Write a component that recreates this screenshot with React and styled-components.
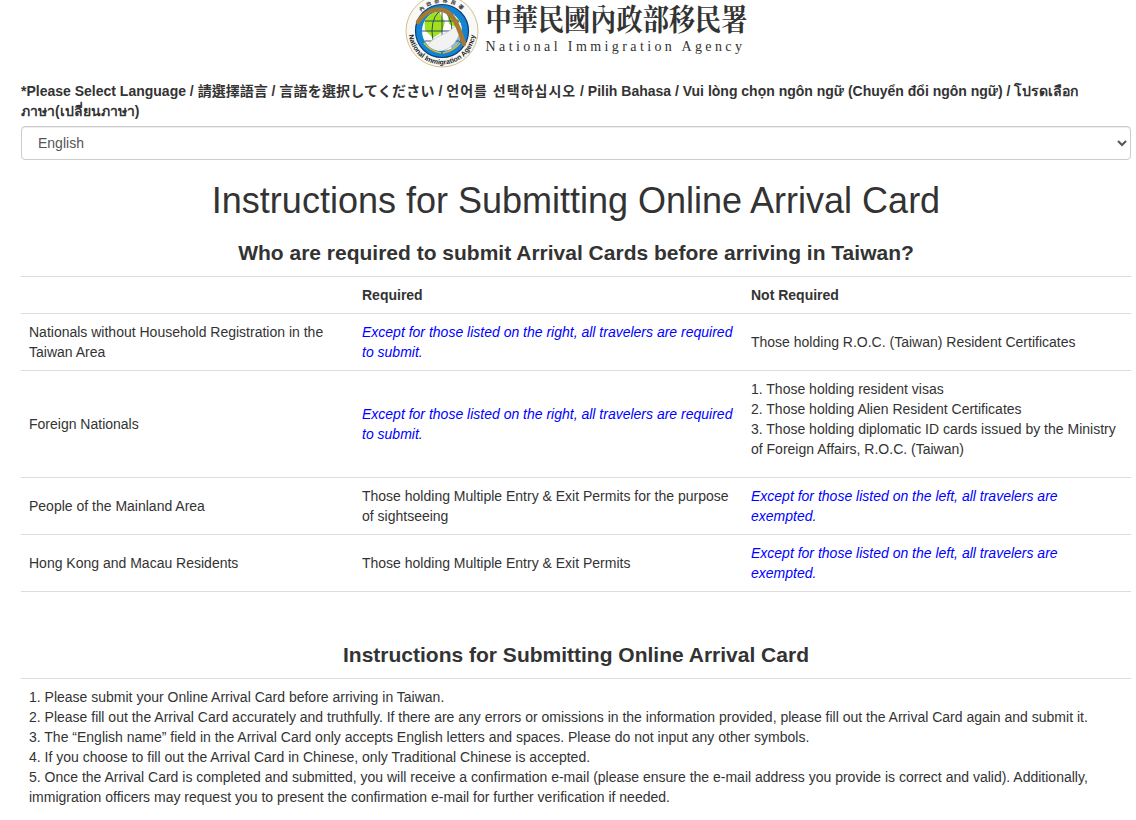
import styled, { createGlobalStyle } from "styled-components";

const GlobalStyle = createGlobalStyle`
  html, body {
    margin: 0;
    padding: 0;
    background: #fff;
  }
  body {
    font-family: "Liberation Sans", "Noto Sans CJK TC", "Noto Sans CJK KR", "Noto Sans", "DejaVu Sans", sans-serif;
    font-size: 14px;
    line-height: 20px;
    color: #333;
  }
`;

const Page = styled.div`
  padding: 0 5px 0 21px;
`;

const Header = styled.header`
  display: flex;
  justify-content: center;
  align-items: flex-start;
  height: 68px;
  overflow: hidden;
`;

const Brand = styled.div`
  display: flex;
  flex-direction: column;
  margin-left: 5px;
`;

const BrandName = styled.div`
  font-family: "Noto Serif CJK TC", "Noto Sans CJK TC", serif;
  font-size: 26.2px;
  font-weight: 700;
  line-height: 36px;
  color: #333;
  transform: scaleY(1.12);
`;

const BrandSub = styled.div`
  font-family: "Liberation Serif", serif;
  font-size: 14px;
  line-height: 18px;
  letter-spacing: 3.4px;
  color: #333;
  margin-top: 2px;
`;

const LangLabel = styled.label`
  display: block;
  margin-top: 13px;
  margin-bottom: 5px;
  font-weight: 700;
  padding-right: 40px;
`;

const Japanese = styled.span`
  letter-spacing: 0.2px;
`;

const Korean = styled.span`
  letter-spacing: 1px;
`;

const Select = styled.select`
  display: block;
  width: 100%;
  height: 34px;
  padding: 6px 12px;
  font-family: inherit;
  font-size: 14px;
  color: #555;
  background: #fff;
  border: 1px solid #ccc;
  border-radius: 4px;
  box-shadow: inset 0 1px 1px rgba(0, 0, 0, 0.075);
`;

const Title = styled.h1`
  margin: 21px 0 10px;
  font-size: 36px;
  font-weight: 500;
  line-height: 40px;
  text-align: center;
  color: #333;
`;

const SubTitle = styled.h3`
  margin: 21px 0 12px;
  font-size: 21px;
  font-weight: 700;
  line-height: 22px;
  text-align: center;
  color: #333;
`;

const Table = styled.table`
  width: 1110px;
  border-collapse: collapse;
  table-layout: fixed;
`;

const Th = styled.th`
  box-sizing: border-box;
  width: ${(p) => p.$w}px;
  padding: 8px;
  text-align: left;
  font-weight: 700;
  vertical-align: bottom;
  border-top: 1px solid #ddd;
  border-bottom: 1px solid #ddd;
`;

const Td = styled.td`
  padding: 8px;
  vertical-align: middle;
  border-bottom: 1px solid #ddd;
  color: ${(p) => (p.$note ? "#00f" : "#333")};
  font-style: ${(p) => (p.$note ? "italic" : "normal")};
`;

const CellList = styled.div`
  margin-bottom: 10px;
`;

const SectionTitle = styled.h3`
  margin: 52px 0 0;
  padding-bottom: 12px;
  border-bottom: 1px solid #ddd;
  font-size: 21px;
  font-weight: 700;
  line-height: 22px;
  text-align: center;
  color: #333;
`;

const Notes = styled.div`
  padding: 8px;
`;

const Logo = () => (
  <svg width="76" height="68" viewBox="0 0 76 68" style={{ display: "block", flex: "none" }} aria-hidden="true">
    <defs>
      <path id="ring-bottom" d="M3.5 31 A33.5 33.5 0 0 0 70.5 31" />
      <path id="ring-top" d="M9 31 A28.5 28.5 0 0 1 66 31" />
      <clipPath id="globe-clip">
        <circle cx="37" cy="31" r="20" />
      </clipPath>
    </defs>
    <circle cx="37" cy="31" r="36" fill="#f8f8f6" stroke="#d6c08c" strokeWidth="1" />
    <circle cx="37" cy="31" r="26.5" fill="#1484d0" stroke="#0d3f78" strokeWidth="1.2" />
    <circle cx="37" cy="31" r="20" fill="#fff" />
    <g clipPath="url(#globe-clip)">
      <path d="M19 15 L33 10 L40 22 L37 32 L28 38 L20 30Z" fill="#a2e01c" />
      <path d="M42 12 L54 20 L57 30 L44 24Z" fill="#a2e01c" />
      <path d="M44 42 L54 34 L58 40 L48 52Z" fill="#8db8da" />
      <g fill="none" stroke="#1c3f66" strokeWidth="0.9">
        <ellipse cx="37" cy="31" rx="10" ry="20" />
        <path d="M37 11V51M17 31H57M20 21H54M20 41H54" />
      </g>
      <path d="M22 47 C26 38 34 37 44 31 C50 27 54 23 58 19 C56 36 50 46 40 50 C33 53 27 51 22 47Z" fill="#f2f2f2" stroke="#aaa" strokeWidth="0.5" />
    </g>
    <path d="M13 22 C22 8 38 6 46 15 C52 22 56 34 59 44" fill="none" stroke="#a67834" strokeWidth="4.5" strokeLinecap="round" />
    <g fill="none" stroke="#e8bc2c" strokeWidth="1.5">
      <path d="M19 43 C24 49 30 52 36 53" />
      <path d="M55 43 C50 49 44 52 38 53" />
    </g>
    <text fontFamily="Liberation Sans, sans-serif" fontSize="7" fontWeight="700" fill="#222">
      <textPath href="#ring-bottom" startOffset="50%" textAnchor="middle">National Immigration Agency</textPath>
    </text>
    <text fontFamily="Noto Sans CJK TC, sans-serif" fontSize="5" fontWeight="700" fill="#333" letterSpacing="3">
      <textPath href="#ring-top" startOffset="50%" textAnchor="middle">內政部移民署</textPath>
    </text>
  </svg>
);

const rows = [
  {
    group: "Nationals without Household Registration in the Taiwan Area",
    required: { text: "Except for those listed on the right, all travelers are required to submit.", note: true },
    notRequired: { text: "Those holding R.O.C. (Taiwan) Resident Certificates" },
  },
  {
    group: "Foreign Nationals",
    required: { text: "Except for those listed on the right, all travelers are required to submit.", note: true },
    notRequired: {
      lines: [
        "1. Those holding resident visas",
        "2. Those holding Alien Resident Certificates",
        "3. Those holding diplomatic ID cards issued by the Ministry of Foreign Affairs, R.O.C. (Taiwan)",
      ],
    },
  },
  {
    group: "People of the Mainland Area",
    required: { text: "Those holding Multiple Entry & Exit Permits for the purpose of sightseeing" },
    notRequired: { text: "Except for those listed on the left, all travelers are exempted.", note: true },
  },
  {
    group: "Hong Kong and Macau Residents",
    required: { text: "Those holding Multiple Entry & Exit Permits" },
    notRequired: { text: "Except for those listed on the left, all travelers are exempted.", note: true },
  },
];

const notes = [
  "1. Please submit your Online Arrival Card before arriving in Taiwan.",
  "2. Please fill out the Arrival Card accurately and truthfully. If there are any errors or omissions in the information provided, please fill out the Arrival Card again and submit it.",
  "3. The “English name” field in the Arrival Card only accepts English letters and spaces. Please do not input any other symbols.",
  "4. If you choose to fill out the Arrival Card in Chinese, only Traditional Chinese is accepted.",
  "5. Once the Arrival Card is completed and submitted, you will receive a confirmation e-mail (please ensure the e-mail address you provide is correct and valid). Additionally, immigration officers may request you to present the confirmation e-mail for further verification if needed.",
];

const Cell = ({ cell }) => (
  <Td $note={cell.note}>
    {cell.lines ? (
      <CellList>
        {cell.lines.map((line) => (
          <div key={line}>{line}</div>
        ))}
      </CellList>
    ) : (
      cell.text
    )}
  </Td>
);

const App = () => (
  <Page>
    <GlobalStyle />
    <Header>
      <Logo />
      <Brand>
        <BrandName>中華民國內政部移民署</BrandName>
        <BrandSub>National Immigration Agency</BrandSub>
      </Brand>
    </Header>

    <LangLabel htmlFor="lang">
      *Please Select Language / 請選擇語言 / <Japanese>言語を選択してください</Japanese> / <Korean>언어를 선택하십시오</Korean> / Pilih Bahasa / Vui lòng chọn ngôn ngữ (Chuyển đổi ngôn ngữ) / โปรดเลือกภาษา(เปลี่ยนภาษา)
    </LangLabel>
    <Select id="lang" defaultValue="en">
      <option value="en">English</option>
    </Select>

    <Title>Instructions for Submitting Online Arrival Card</Title>
    <SubTitle>Who are required to submit Arrival Cards before arriving in Taiwan?</SubTitle>

    <Table>
      <thead>
        <tr>
          <Th $w={333}></Th>
          <Th $w={389}>Required</Th>
          <Th $w={388}>Not Required</Th>
        </tr>
      </thead>
      <tbody>
        {rows.map((row) => (
          <tr key={row.group}>
            <Td>{row.group}</Td>
            <Cell cell={row.required} />
            <Cell cell={row.notRequired} />
          </tr>
        ))}
      </tbody>
    </Table>

    <SectionTitle>Instructions for Submitting Online Arrival Card</SectionTitle>
    <Notes>
      {notes.map((note) => (
        <div key={note}>{note}</div>
      ))}
    </Notes>
  </Page>
);

export default App;
